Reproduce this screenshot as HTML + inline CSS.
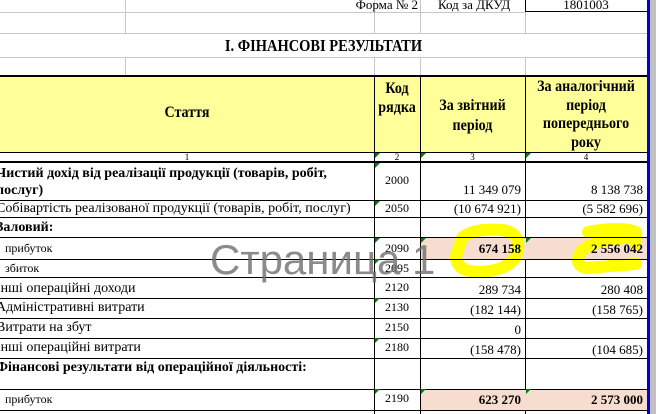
<!DOCTYPE html>
<html><head><meta charset="utf-8"><style>
body{margin:0;width:656px;height:414px;overflow:hidden;background:#fff;position:relative;font-family:"Liberation Serif","DejaVu Serif",serif;color:#000}
.a{position:absolute}
.h{position:absolute;left:0;width:647px;height:1px;background:#000}
.g{position:absolute;height:1px;background:#c8c8c8}
.v{position:absolute;width:1px;background:#000}
.vg{position:absolute;width:1px;background:#c8c8c8}
.t{position:absolute;font-size:14px;white-space:nowrap;line-height:16px}
.b{font-weight:bold}
.r{text-align:right}
.c{text-align:center}
.tri{position:absolute;width:0;height:0;border-top:5px solid #008000;border-right:5px solid transparent}
.hd{font-size:16px;transform:scaleX(0.88);transform-origin:center}
</style></head><body>
<div class="g" style="left:0;top:12px;width:525px"></div>
<div class="g" style="left:0;top:33px;width:647px"></div>
<div class="g" style="left:0;top:57px;width:647px"></div>
<div class="vg" style="left:125px;top:0;height:12px"></div>
<div class="vg" style="left:125px;top:12px;height:21px"></div>
<div class="vg" style="left:125px;top:57px;height:19px"></div>
<div class="vg" style="left:374px;top:0;height:33px"></div>
<div class="vg" style="left:374px;top:57px;height:19px"></div>
<div class="vg" style="left:420px;top:0;height:33px"></div>
<div class="vg" style="left:420px;top:57px;height:19px"></div>
<div class="vg" style="left:525px;top:12px;height:21px"></div>
<div class="vg" style="left:525px;top:57px;height:19px"></div>
<div class="v" style="left:525px;top:0;height:12px"></div>
<div class="h" style="left:525px;width:122px;top:11px"></div>
<div class="t r" style="left:300px;width:118px;top:-3px;font-size:13px">Форма № 2</div>
<div class="t" style="left:438px;top:-3px;font-size:13px">Код за ДКУД</div>
<div class="t c" style="left:525px;width:122px;top:-3px;font-size:13px">1801003</div>
<div class="t b c" style="left:0;width:647px;top:36px;font-size:17px;line-height:20px;transform:scaleX(0.85)">І. ФІНАНСОВІ РЕЗУЛЬТАТИ</div>
<div class="a" style="left:0;top:76px;width:647px;height:77px;background:#ffff99"></div>
<div class="a" style="left:0;top:75px;width:647px;height:2px;background:#000"></div>
<div class="h" style="top:152px"></div>
<div class="a" style="left:0;top:161px;width:647px;height:2px;background:#000"></div>
<div class="v" style="left:374px;top:76px;height:338px"></div>
<div class="v" style="left:420px;top:76px;height:338px"></div>
<div class="v" style="left:525px;top:76px;height:338px"></div>
<div class="t b c hd" style="left:0;width:374px;top:105px">Стаття</div>
<div class="t b c hd" style="left:374px;width:46px;top:79px;line-height:19px">Код<br>рядка</div>
<div class="t b c hd" style="left:420px;width:105px;top:96px;line-height:20px">За звітний<br>період</div>
<div class="t b c hd" style="left:525px;width:122px;top:78px;line-height:18.5px">За аналогічний<br>період<br>попереднього<br>року</div>
<div class="t c" style="left:0;width:374px;top:152px;font-size:9px;line-height:10px">1</div>
<div class="t c" style="left:374px;width:46px;top:152px;font-size:9px;line-height:10px">2</div>
<div class="t c" style="left:420px;width:105px;top:152px;font-size:9px;line-height:10px">3</div>
<div class="t c" style="left:525px;width:122px;top:152px;font-size:9px;line-height:10px">4</div>
<div class="tri" style="left:375px;top:153px"></div><div class="tri" style="left:421px;top:153px"></div><div class="tri" style="left:526px;top:153px"></div>
<div class="a" style="left:421px;top:238px;width:226px;height:21px;background:#f6ddd0"></div>
<div class="a" style="left:421px;top:389px;width:226px;height:21px;background:#f6ddd0"></div>
<svg class="a" style="left:0;top:0" width="656" height="414">
<path d="M462 238 Q472 228 502 230 Q520 232 518 250 Q514 270 480 272 Q456 272 456 256 Z" fill="none" stroke="#ffff00" stroke-width="12" stroke-linejoin="round"/>
<path d="M588 232 Q620 226 636 232 L636 244 M632 238 Q598 238 582 250 Q572 264 586 268 L636 264" fill="none" stroke="#ffff00" stroke-width="12" stroke-linecap="round" stroke-linejoin="round"/>
</svg>
<div class="h" style="top:200px"></div>
<div class="h" style="top:217px"></div>
<div class="h" style="top:237px"></div>
<div class="h" style="top:259px"></div>
<div class="h" style="top:277px"></div>
<div class="h" style="top:298px"></div>
<div class="h" style="top:318px"></div>
<div class="h" style="top:338px"></div>
<div class="h" style="top:358px"></div>
<div class="h" style="top:389px"></div>
<div class="h" style="top:410px"></div>
<div class="t b" style="left:-4px;top:165px;line-height:17px">Чистий дохід від реалізації продукції (товарів, робіт,<br>послуг)</div>
<div class="t c" style="left:374px;width:46px;top:172px;font-size:12px">2000</div>
<div class="t r" style="left:420px;width:101px;top:182px;font-size:13px">11 349 079</div>
<div class="t r" style="left:525px;width:118px;top:182px;font-size:13px">8 138 738</div>
<div class="t" style="left:-4px;top:201px">Собівартість реалізованої продукції (товарів, робіт, послуг)</div>
<div class="t c" style="left:374px;width:46px;top:200px;font-size:12px">2050</div>
<div class="t r" style="left:420px;width:101px;top:201px;font-size:13px">(10 674 921)</div>
<div class="t r" style="left:525px;width:118px;top:201px;font-size:13px">(5 582 696)</div>
<div class="t b" style="left:-4px;top:220px">Заловий:</div>
<div class="t" style="left:5px;top:240px;font-size:12px">прибуток</div>
<div class="t c" style="left:374px;width:46px;top:240px;font-size:12px">2090</div>
<div class="t r b" style="left:420px;width:101px;top:241px;font-size:13px">674 158</div>
<div class="t r b" style="left:525px;width:118px;top:241px;font-size:13px">2 556 042</div>
<div class="t" style="left:5px;top:260px;font-size:12px">збиток</div>
<div class="t c" style="left:374px;width:46px;top:260px;font-size:12px">2095</div>
<div class="t" style="left:-4px;top:281px">Інші операційні доходи</div>
<div class="t c" style="left:374px;width:46px;top:279px;font-size:12px">2120</div>
<div class="t r" style="left:420px;width:101px;top:282px;font-size:13px">289 734</div>
<div class="t r" style="left:525px;width:118px;top:282px;font-size:13px">280 408</div>
<div class="t" style="left:-4px;top:300px">Адміністративні витрати</div>
<div class="t c" style="left:374px;width:46px;top:299px;font-size:12px">2130</div>
<div class="t r" style="left:420px;width:101px;top:302px;font-size:13px">(182 144)</div>
<div class="t r" style="left:525px;width:118px;top:302px;font-size:13px">(158 765)</div>
<div class="t" style="left:-4px;top:320px">Витрати на збут</div>
<div class="t c" style="left:374px;width:46px;top:319px;font-size:12px">2150</div>
<div class="t r" style="left:420px;width:101px;top:322px;font-size:13px">0</div>
<div class="t" style="left:-4px;top:340px">Інші операційні витрати</div>
<div class="t c" style="left:374px;width:46px;top:339px;font-size:12px">2180</div>
<div class="t r" style="left:420px;width:101px;top:342px;font-size:13px">(158 478)</div>
<div class="t r" style="left:525px;width:118px;top:342px;font-size:13px">(104 685)</div>
<div class="t b" style="left:-4px;top:360px">Фінансові результати від операційної діяльності:</div>
<div class="t" style="left:5px;top:391px;font-size:12px">прибуток</div>
<div class="t c" style="left:374px;width:46px;top:390px;font-size:12px">2190</div>
<div class="t r b" style="left:420px;width:101px;top:392px;font-size:13px">623 270</div>
<div class="t r b" style="left:525px;width:118px;top:392px;font-size:13px">2 573 000</div>
<div class="tri" style="left:375px;top:163px"></div><div class="tri" style="left:375px;top:201px"></div>
<div class="tri" style="left:375px;top:238px"></div><div class="tri" style="left:421px;top:238px"></div><div class="tri" style="left:526px;top:238px"></div>
<div class="tri" style="left:375px;top:259px"></div><div class="tri" style="left:375px;top:298px"></div><div class="tri" style="left:375px;top:338px"></div>
<div class="tri" style="left:375px;top:389px"></div><div class="tri" style="left:421px;top:389px"></div><div class="tri" style="left:526px;top:389px"></div>
<div class="t" style="left:210px;top:236px;font-family:'Liberation Sans',sans-serif;font-size:42px;line-height:48px;color:rgba(110,110,110,0.8)">Страница 1</div>
<div class="a" style="left:647px;top:0;width:3px;height:414px;background:#0000c8"></div>
<div class="a" style="left:650px;top:0;width:6px;height:414px;background:#c0c0c0"></div>
</body></html>
